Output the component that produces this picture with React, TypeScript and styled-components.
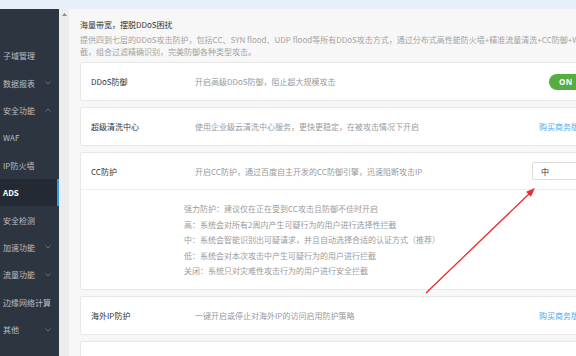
import React from "react";
import styled, { createGlobalStyle, css } from "styled-components";

const Global = createGlobalStyle`
  html, body {
    margin: 0;
    padding: 0;
    width: 576px;
    height: 356px;
    overflow: hidden;
    background: #f7f7f7;
    font-family: "Noto Sans CJK SC", "Noto Sans", sans-serif;
  }
  * { box-sizing: border-box; }
`;

const Page = styled.div`
  position: relative;
  width: 576px;
  height: 356px;
  display: flex;
  flex-direction: column;
  overflow: hidden;
`;

const TopBar = styled.div`
  height: 9px;
  flex: none;
  background: #e7eff8;
`;

const Body = styled.div`
  flex: 1;
  display: flex;
  min-height: 0;
`;

const Sidebar = styled.nav`
  width: 59px;
  flex: none;
  background: #2d3541;
  padding-top: 33px;
  display: flex;
  flex-direction: column;
`;

const NavItem = styled.div<{ $active?: boolean }>`
  height: 27.4px;
  display: flex;
  align-items: center;
  justify-content: space-between;
  padding: 0 8px 0 3px;
  font-size: 8px;
  white-space: nowrap;
  color: #b9bec5;
  ${(p) =>
    p.$active &&
    css`
      background: #232a34;
      color: #ffffff;
      font-weight: 700;
      box-shadow: inset -2px 0 0 #2f9bf0;
    `}
`;

const ScrollTrack = styled.div`
  width: 10px;
  flex: none;
  background: #ededed;
  display: flex;
  justify-content: center;
  padding-top: 4px;
`;

const Main = styled.main`
  flex: 1;
  min-width: 0;
  overflow: hidden;
  padding: 10px 0 0 11px;
`;

const IntroTitle = styled.div`
  font-size: 8px;
  line-height: 12px;
  color: #333;
  white-space: nowrap;
`;

const IntroText = styled.div`
  margin-top: 3px;
  font-size: 8px;
  line-height: 12px;
  color: #a3a3a3;
  white-space: nowrap;
`;

const CardList = styled.div`
  margin-top: 4px;
  width: 540px;
  display: flex;
  flex-direction: column;
  gap: 6px;
`;

const Card = styled.section`
  background: #fff;
  border: 1px solid #e8e8e8;
  border-radius: 2px;
`;

const CardHead = styled.div<{ $divided?: boolean }>`
  height: 37px;
  display: grid;
  grid-template-columns: 104px 337px 1fr;
  align-items: center;
  padding-left: 10px;
  ${(p) => p.$divided && css`border-bottom: 1px solid #eeeeee;`}
`;

const CardTitle = styled.div`
  font-size: 8px;
  color: #333;
  white-space: nowrap;
`;

const CardDesc = styled.div`
  font-size: 8px;
  color: #999;
  white-space: nowrap;
`;

const Control = styled.div<{ $offset: number }>`
  padding-left: ${(p) => p.$offset}px;
  display: flex;
  align-items: center;
`;

const Toggle = styled.div`
  width: 42px;
  height: 16px;
  border-radius: 8px;
  background: #57ad3f;
  color: #fff;
  font-size: 8px;
  font-weight: 700;
  letter-spacing: 0.5px;
  display: flex;
  align-items: center;
  padding-left: 10px;
  font-family: "Noto Sans", sans-serif;
`;

const Link = styled.a`
  font-size: 8px;
  color: #5aa6ea;
  white-space: nowrap;
  text-decoration: none;
`;

const Select = styled.div`
  width: 80px;
  height: 18px;
  border: 1px solid #dcdcdc;
  border-radius: 2px;
  background: #fff;
  font-size: 8px;
  color: #333;
  display: flex;
  align-items: center;
  padding-left: 8px;
`;

const Options = styled.div`
  padding: 11px 0 10px 103px;
`;

const Option = styled.div`
  font-size: 8px;
  line-height: 15.6px;
  color: #9a9a9a;
  white-space: nowrap;
`;

const Overlay = styled.svg`
  position: absolute;
  left: 0;
  top: 0;
  pointer-events: none;
`;

const Chevron = ({ up }: { up?: boolean }) => (
  <svg width="6" height="4" viewBox="0 0 6 4">
    <polyline
      points={up ? "0.5,3.5 3,1 5.5,3.5" : "0.5,0.5 3,3 5.5,0.5"}
      fill="none"
      stroke="#6f7884"
      strokeWidth="0.9"
    />
  </svg>
);

const navItems: { label: string; chevron?: "up" | "down"; active?: boolean }[] = [
  { label: "子域管理" },
  { label: "数据报表", chevron: "down" },
  { label: "安全功能", chevron: "up" },
  { label: "WAF" },
  { label: "IP防火墙" },
  { label: "ADS", active: true },
  { label: "安全检测" },
  { label: "加速功能", chevron: "down" },
  { label: "流量功能", chevron: "down" },
  { label: "边缘网络计算" },
  { label: "其他", chevron: "down" },
];

const ccOptions = [
  "强力防护：建议仅在正在受到CC攻击且防御不佳时开启",
  "高：系统会对所有2周内产生可疑行为的用户进行选择性拦截",
  "中：系统会智能识别出可疑请求，并且自动选择合适的认证方式（推荐）",
  "低：系统会对本次攻击中产生可疑行为的用户进行拦截",
  "关闭：系统只对灾难性攻击行为的用户进行安全拦截",
];

export default function App() {
  return (
    <Page>
      <Global />
      <TopBar />
      <Body>
        <Sidebar>
          {navItems.map((item) => (
            <NavItem key={item.label} $active={item.active}>
              <span>{item.label}</span>
              {item.chevron && <Chevron up={item.chevron === "up"} />}
            </NavItem>
          ))}
        </Sidebar>
        <ScrollTrack>
          <svg width="5" height="3" viewBox="0 0 5 3">
            <polygon points="2.5,0 5,3 0,3" fill="#8a8a8a" />
          </svg>
        </ScrollTrack>
        <Main>
          <IntroTitle>海量带宽，摆脱DDoS困扰</IntroTitle>
          <IntroText>
            提供四到七层的DDoS攻击防护，包括CC、SYN flood、UDP flood等所有DDoS攻击方式，通过分布式高性能防火墙+精准流量清洗+CC防御+WEB攻击拦
            <br />
            截，组合过滤精确识别，完美防御各种类型攻击。
          </IntroText>
          <CardList>
            <Card>
              <CardHead>
                <CardTitle>DDoS防御</CardTitle>
                <CardDesc>开启高级DDoS防御，阻止超大规模攻击</CardDesc>
                <Control $offset={17}>
                  <Toggle>ON</Toggle>
                </Control>
              </CardHead>
            </Card>
            <Card>
              <CardHead>
                <CardTitle>超级清洗中心</CardTitle>
                <CardDesc>使用企业级云清洗中心服务，更快更稳定，在被攻击情况下开启</CardDesc>
                <Control $offset={7}>
                  <Link>购买商务版</Link>
                </Control>
              </CardHead>
            </Card>
            <Card>
              <CardHead $divided>
                <CardTitle>CC防护</CardTitle>
                <CardDesc>开启CC防护，通过百度自主开发的CC防御引擎，迅速阻断攻击IP</CardDesc>
                <Control $offset={0}>
                  <Select>中</Select>
                </Control>
              </CardHead>
              <Options>
                {ccOptions.map((o) => (
                  <Option key={o}>{o}</Option>
                ))}
              </Options>
            </Card>
            <Card>
              <CardHead>
                <CardTitle>海外IP防护</CardTitle>
                <CardDesc>一键开启或停止对海外IP的访问启用防护策略</CardDesc>
                <Control $offset={7}>
                  <Link>购买商务版</Link>
                </Control>
              </CardHead>
            </Card>
            <Card>
              <CardHead />
            </Card>
          </CardList>
        </Main>
      </Body>
      <Overlay width="576" height="356" viewBox="0 0 576 356">
        <line x1="426" y1="293" x2="530" y2="193" stroke="#ee2a2a" strokeWidth="1.3" />
        <polygon points="535,188 530.9,196.8 526.1,191.7" fill="#ee2a2a" />
      </Overlay>
    </Page>
  );
}
